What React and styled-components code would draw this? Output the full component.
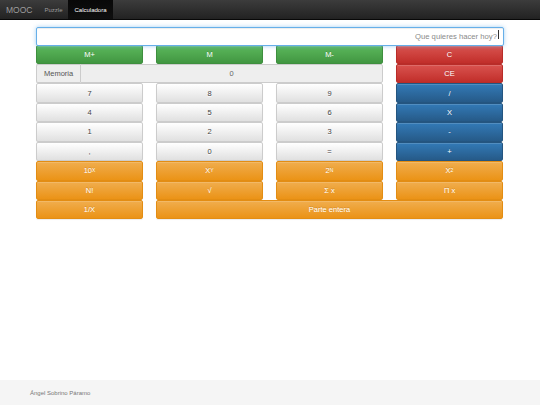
import React from 'react';
import styled, { createGlobalStyle, css } from 'styled-components';

const GlobalStyle = createGlobalStyle`
  html, body {
    margin: 0;
    padding: 0;
    background: #fff;
    font-family: "Liberation Sans", Arial, sans-serif;
  }
  * { box-sizing: border-box; }
`;

const Page = styled.div`
  display: flex;
  flex-direction: column;
  width: 540px;
  height: 405px;
  overflow: hidden;
`;

const Navbar = styled.nav`
  display: flex;
  align-items: stretch;
  height: 20px;
  background: linear-gradient(to bottom, #3c3c3c 0%, #222 100%);
  border-bottom: 1px solid #080808;
`;

const Brand = styled.span`
  display: flex;
  align-items: center;
  padding: 0 6px;
  font-size: 8.5px;
  color: #9d9d9d;
`;

const NavItem = styled.span`
  display: flex;
  align-items: center;
  padding: 0 6px;
  font-size: 6px;
  color: ${p => (p.active ? '#fff' : '#9d9d9d')};
  ${p =>
    p.active &&
    css`
      background: linear-gradient(to bottom, #080808 0%, #0f0f0f 100%);
    `}
`;

const Main = styled.main`
  flex: 1;
  padding: 5px 36px 0 36px;
`;

const SearchBox = styled.div`
  position: relative;
  width: 468px;
  height: 19px;
  margin-bottom: 0.5px;
`;

const SearchInput = styled.input`
  width: 100%;
  height: 100%;
  border: 1px solid #66afe9;
  border-radius: 2px;
  box-shadow: inset 0 1px 1px rgba(0, 0, 0, 0.075), 0 0 4px rgba(102, 175, 233, 0.6);
  padding: 0 6px;
  text-align: right;
  font-family: "Liberation Sans", Arial, sans-serif;
  font-size: 7.7px;
  outline: none;
  &::placeholder {
    color: #8a8a8a;
  }
`;

const Caret = styled.span`
  position: absolute;
  right: 5px;
  top: 5px;
  width: 1px;
  height: 9px;
  background: #333;
`;

const Pad = styled.div`
  display: grid;
  grid-template-columns: repeat(4, 107px);
  grid-auto-rows: 19.45px;
  column-gap: 13px;
`;

const variants = {
  default: css`
    background: linear-gradient(to bottom, #fff 0%, #e0e0e0 100%);
    border-color: #ccc;
    color: #444;
  `,
  success: css`
    background: linear-gradient(to bottom, #5cb85c 0%, #419641 100%);
    border-color: #3e8f3e;
    color: #fff;
  `,
  danger: css`
    background: linear-gradient(to bottom, #d9534f 0%, #c12e2a 100%);
    border-color: #b92c28;
    color: #fff;
  `,
  primary: css`
    background: linear-gradient(to bottom, #337ab7 0%, #265a88 100%);
    border-color: #245580;
    color: #fff;
  `,
  warning: css`
    background: linear-gradient(to bottom, #f0ad4e 0%, #eb9316 100%);
    border-color: #e38d13;
    color: #fff;
  `
};

const Key = styled.button`
  display: flex;
  align-items: center;
  justify-content: center;
  margin: 0;
  padding: 0;
  border: 1px solid;
  border-radius: 2px;
  font-family: "Liberation Sans", Arial, sans-serif;
  font-size: 7.5px;
  text-shadow: ${p => (p.variant === 'default' ? '0 1px 0 #fff' : '0 -1px 0 rgba(0,0,0,0.15)')};
  box-shadow: inset 0 1px 0 rgba(255, 255, 255, 0.15), 0 1px 1px rgba(0, 0, 0, 0.075);
  grid-column: ${p => (p.span ? `span ${p.span}` : 'auto')};
  ${p => variants[p.variant || 'default']}

  sup {
    font-size: 5px;
    line-height: 0;
    position: relative;
    top: -1px;
    vertical-align: super;
  }
`;

const MemoryGroup = styled.div`
  grid-column: span 3;
  display: flex;
  height: 100%;
`;

const MemoryLabel = styled.span`
  display: flex;
  align-items: center;
  padding: 0 7px;
  font-size: 7.5px;
  color: #555;
  background: #eee;
  border: 1px solid #ccc;
  border-right: 0;
  border-radius: 2px 0 0 2px;
`;

const MemoryValue = styled.div`
  flex: 1;
  display: flex;
  align-items: center;
  justify-content: center;
  font-size: 7.5px;
  color: #666;
  background: #eee;
  border: 1px solid #ccc;
  border-radius: 0 2px 2px 0;
`;

const Footer = styled.footer`
  height: 25px;
  background: #f5f5f5;
  display: flex;
  align-items: center;
  padding-left: 30px;
  font-size: 6px;
  color: #777;
`;

const rows = [
  [['M+', 'success'], ['M', 'success'], ['M-', 'success'], ['C', 'danger']],
  'memory',
  [['7'], ['8'], ['9'], ['/', 'primary']],
  [['4'], ['5'], ['6'], ['X', 'primary']],
  [['1'], ['2'], ['3'], ['-', 'primary']],
  [[','], ['0'], ['='], ['+', 'primary']],
  [
    [<>10<sup>X</sup></>, 'warning'],
    [<>X<sup>Y</sup></>, 'warning'],
    [<>2<sup>N</sup></>, 'warning'],
    [<>X<sup>2</sup></>, 'warning']
  ],
  [['N!', 'warning'], ['√', 'warning'], ['Σ x', 'warning'], ['Π x', 'warning']],
  [['1/X', 'warning'], ['Parte entera', 'warning', 3]]
];

export default function App() {
  return (
    <Page>
      <GlobalStyle />
      <Navbar>
        <Brand>MOOC</Brand>
        <NavItem>Puzzle</NavItem>
        <NavItem active>Calculadora</NavItem>
      </Navbar>
      <Main>
        <SearchBox>
          <SearchInput placeholder="Que quieres hacer hoy?" />
          <Caret />
        </SearchBox>
        <Pad>
          {rows.map((row, i) =>
            row === 'memory' ? (
              <React.Fragment key={i}>
                <MemoryGroup>
                  <MemoryLabel>Memoria</MemoryLabel>
                  <MemoryValue>0</MemoryValue>
                </MemoryGroup>
                <Key variant="danger">CE</Key>
              </React.Fragment>
            ) : (
              row.map(([label, variant, span], j) => (
                <Key key={`${i}-${j}`} variant={variant || 'default'} span={span}>
                  {label}
                </Key>
              ))
            )
          )}
        </Pad>
      </Main>
      <Footer>Ángel Sobrino Páramo</Footer>
    </Page>
  );
}
